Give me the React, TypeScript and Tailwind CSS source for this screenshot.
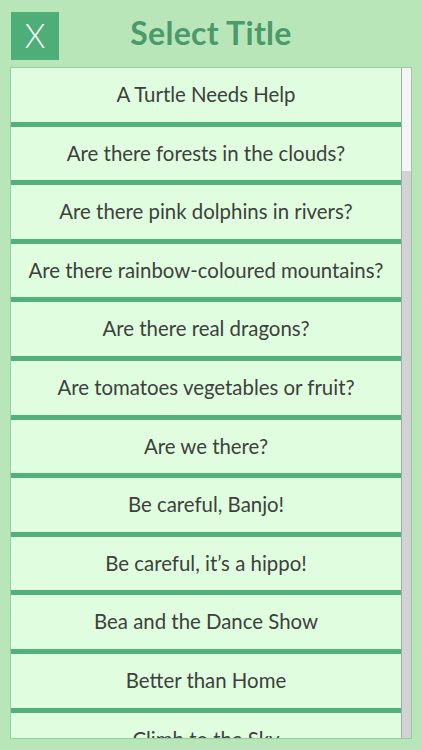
const titles = [
  'A Turtle Needs Help',
  'Are there forests in the clouds?',
  'Are there pink dolphins in rivers?',
  'Are there rainbow-coloured mountains?',
  'Are there real dragons?',
  'Are tomatoes vegetables or fruit?',
  'Are we there?',
  'Be careful, Banjo!',
  'Be careful, it\u2019s a hippo!',
  'Bea and the Dance Show',
  'Better than Home',
  'Climb to the Sky',
];

const App = () => {
  return (
    <div className="w-[422px] h-[750px] bg-[#b9e6b9] flex flex-col font-['Lato',sans-serif] overflow-hidden">
      <div className="flex items-center h-[67px] pt-[4px] px-[11px]">
        <button className="w-[48px] h-[48px] bg-[#4dae77] flex items-center justify-center text-white text-[33px] font-light leading-none">
          X
        </button>
        <h1 className="flex-1 text-center text-[32px] font-bold text-[#4b9a6b] leading-none tracking-[0.3px] mb-[5px]">
          Select Title
        </h1>
        <div className="w-[48px]" />
      </div>
      <div className="mx-[10px] h-[672px] border border-[#8fd09c] flex">
        <div className="flex-1 overflow-hidden">
          {titles.map((t) => (
            <div
              key={t}
              className="h-[58.6px] bg-[#e1fde0] border-b-[5px] border-[#52b07a] flex items-center justify-center pb-[1px] text-[20.4px] text-[#3c413c]"
            >
              {t}
            </div>
          ))}
        </div>
        <div className="w-[10px] flex flex-col border-l border-[#a9a9a9]">
          <div className="h-[103px] bg-[#f5f5f5]" />
          <div className="flex-1 bg-[#d3d3d3]" />
        </div>
      </div>
    </div>
  );
};

export default App;
